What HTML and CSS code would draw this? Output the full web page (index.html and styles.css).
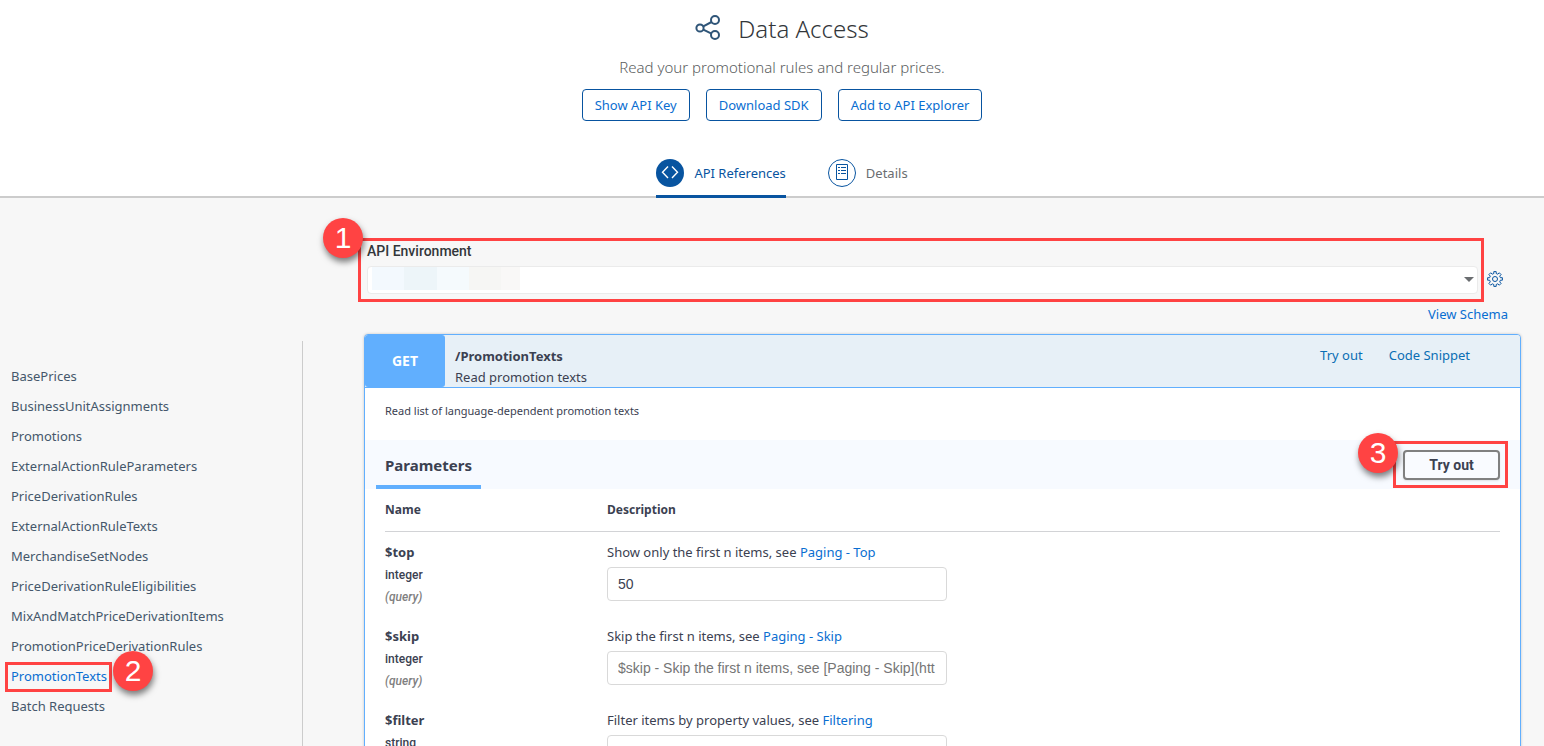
FILE: index.html
```html
<!DOCTYPE html>
<html lang="en">
<head>
<meta charset="utf-8">
<meta name="viewport" content="width=device-width, initial-scale=1">
<title>Data Access</title>
<link rel="stylesheet" href="styles.css">
</head>
<body>
<div class="page">
  <header class="hero">
    <div class="hero-title">
      <svg class="share-icon" viewBox="0 0 26 26" width="26" height="26" aria-hidden="true">
        <g fill="none" stroke="#2f5578" stroke-width="2">
          <circle cx="5" cy="14" r="3.600"/>
          <circle cx="20" cy="6" r="4"/>
          <circle cx="20" cy="21" r="4"/>
          <path d="M8.300 12.300 16.500 8M8.300 15.700l8.200 4"/>
        </g>
      </svg>
      <h1>Data Access</h1>
    </div>
    <p class="hero-text">Read your promotional rules and regular prices.</p>
    <div class="hero-actions">
      <button type="button" class="btn">Show API Key</button>
      <button type="button" class="btn">Download SDK</button>
      <button type="button" class="btn">Add to API Explorer</button>
    </div>
    <nav class="tabs" aria-label="API sections">
      <a href="#references" class="tab tab-active">
        <svg viewBox="0 0 28 28" width="28" height="28" aria-hidden="true">
          <circle cx="14" cy="14" r="14" fill="#0854a0"/>
          <path d="M12 7.500 6.500 13.300 12 19M16 7.500l5.500 5.800L16 19" fill="none" stroke="#fff" stroke-width="1.400"/>
        </svg>
        <span>API References</span>
      </a>
      <a href="#details" class="tab">
        <svg viewBox="0 0 28 28" width="28" height="28" aria-hidden="true">
          <g fill="none" stroke="#0854a0">
            <circle cx="14" cy="14" r="13.500"/>
            <path d="M8.500 5.500h11v15h-11z"/>
            <path d="M10 8.500h2M13 8.500h5M10 11.500h2M13 11.500h5M10 14.500h2M13 14.500h5"/>
          </g>
        </svg>
        <span>Details</span>
      </a>
    </nav>
  </header>

  <div class="body">
    <nav class="sidebar" aria-label="Resources">
      <ul>
        <li><a href="#BasePrices">BasePrices</a></li>
        <li><a href="#BusinessUnitAssignments">BusinessUnitAssignments</a></li>
        <li><a href="#Promotions">Promotions</a></li>
        <li><a href="#ExternalActionRuleParameters">ExternalActionRuleParameters</a></li>
        <li><a href="#PriceDerivationRules">PriceDerivationRules</a></li>
        <li><a href="#ExternalActionRuleTexts">ExternalActionRuleTexts</a></li>
        <li><a href="#MerchandiseSetNodes">MerchandiseSetNodes</a></li>
        <li><a href="#PriceDerivationRuleEligibilities">PriceDerivationRuleEligibilities</a></li>
        <li><a href="#MixAndMatchPriceDerivationItems">MixAndMatchPriceDerivationItems</a></li>
        <li><a href="#PromotionPriceDerivationRules">PromotionPriceDerivationRules</a></li>
        <li class="callout callout-link"><a class="current" href="#PromotionTexts">PromotionTexts</a><span class="badge">2</span></li>
        <li><a href="#BatchRequests">Batch Requests</a></li>
      </ul>
    </nav>

    <main class="main">
      <div class="env-row">
        <div class="env callout callout-env">
          <label for="env">API Environment</label>
          <div class="select-wrap">
            <select id="env"><option value=""></option></select>
            <svg class="caret" viewBox="0 0 10 5" width="10" height="5" aria-hidden="true"><path d="M0 0h10L5 5z" fill="#6a6d70"/></svg>
          </div>
          <span class="badge">1</span>
        </div>
        <button type="button" class="gear" aria-label="Configure environments">
          <svg viewBox="0 0 16 16" width="16" height="16" aria-hidden="true">
            <g fill="none" stroke="#0854a0" stroke-linejoin="round">
              <path d="M6.800.600h2.400v1.900l1.600.700 1.500-1.400 1.800 1.800-1.400 1.500.700 1.600h2v2.500h-2l-.700 1.700 1.400 1.500-1.800 1.800-1.500-1.400-1.600.700v1.900H6.800v-1.900l-1.600-.700-1.500 1.400-1.800-1.800 1.400-1.500-.700-1.700H.600V6.700h2l.700-1.600-1.400-1.500 1.800-1.800 1.500 1.400 1.600-.700z"/>
              <circle cx="8" cy="8" r="2.500"/>
            </g>
          </svg>
        </button>
      </div>
      <a class="schema-link" href="#schema">View Schema</a>

      <section class="operation">
        <div class="op-head">
          <span class="method">GET</span>
          <div class="op-title">
            <h2>/PromotionTexts</h2>
            <p>Read promotion texts</p>
          </div>
          <div class="op-links">
            <a href="#try">Try out</a>
            <a href="#snippet">Code Snippet</a>
          </div>
        </div>
        <p class="op-description">Read list of language-dependent promotion texts</p>
        <div class="params-head">
          <h3>Parameters</h3>
          <div class="callout callout-try">
            <button type="button" class="try">Try out</button>
            <span class="badge">3</span>
          </div>
        </div>
        <div class="params-body">
          <table class="params">
            <thead><tr><th scope="col">Name</th><th scope="col">Description</th></tr></thead>
            <tbody>
              <tr>
                <td><label class="name" for="top">$top</label><span class="type">integer</span><span class="in">(query)</span></td>
                <td><p>Show only the first n items, see <a href="#paging-top">Paging - Top</a></p><input id="top" type="text" value="50"></td>
              </tr>
              <tr>
                <td><label class="name" for="skip">$skip</label><span class="type">integer</span><span class="in">(query)</span></td>
                <td><p>Skip the first n items, see <a href="#paging-skip">Paging - Skip</a></p><input id="skip" type="text" placeholder="$skip - Skip the first n items, see [Paging - Skip](htt"></td>
              </tr>
              <tr>
                <td><label class="name" for="filter">$filter</label><span class="type">string</span><span class="in">(query)</span></td>
                <td><p>Filter items by property values, see <a href="#filtering">Filtering</a></p><input id="filter" type="text"></td>
              </tr>
            </tbody>
          </table>
        </div>
      </section>
    </main>
  </div>
</div>
</body>
</html>
```

FILE: styles.css
```css
:root {
  --ui: "Noto Sans", "Open Sans", sans-serif;
  --arial: "Liberation Sans", Arial, sans-serif;
  --link: #0a6ed1;
  --brand: #0854a0;
  --get: #61affe;
  --text: #3b4151;
  --mark: #ff4343;
}

* { box-sizing: border-box; }

body {
  margin: 0;
  font: 13px/20px var(--ui);
  color: var(--text);
  background: #f7f7f7;
}

h1, h2, h3, p, ul { margin: 0; padding: 0; }
ul { list-style: none; }
a { color: var(--link); text-decoration: none; }
button { font: inherit; cursor: pointer; }

.page {
  display: flex;
  flex-direction: column;
  height: 100vh;
  overflow: hidden;
}

/* Header */
.hero {
  display: flex;
  flex: none;
  flex-direction: column;
  align-items: center;
  padding: 11px 0 0 20px;
  background: #fff;
  border-bottom: 2px solid #ccc;
}

.hero-title {
  display: flex;
  align-items: center;
  gap: 17px;
  height: 36px;
}

.share-icon { margin-bottom: 4px; }

h1 {
  font: 300 24px/36px var(--ui);
  color: #32363a;
}

.hero-text {
  margin: 10px 0 12px;
  font: 300 15px/20px var(--ui);
  color: #5a5d60;
}

.hero-actions { display: flex; gap: 16px; }

.btn {
  height: 32px;
  padding: 0 12px;
  color: var(--link);
  background: #fff;
  border: 1px solid var(--brand);
  border-radius: 4px;
}

.tabs {
  display: flex;
  gap: 42px;
  margin: 38px 0 -2px;
}

.tab {
  display: flex;
  align-items: center;
  gap: 10px;
  padding-bottom: 8px;
  color: #6a6d70;
  border-bottom: 3px solid transparent;
}

.tab-active {
  color: var(--brand);
  border-color: var(--brand);
}

/* Columns */
.body {
  display: flex;
  flex: 1;
  min-height: 0;
}

.sidebar {
  flex: none;
  width: 303px;
  margin-top: 143px;
  padding: 20px 0 0 11px;
  border-right: 1px solid #ccc;
}

.sidebar li { width: fit-content; line-height: 30px; }
.sidebar a { display: block; color: #45576b; }
.sidebar a.current { color: var(--link); }

.main {
  display: flex;
  flex: 1;
  flex-direction: column;
  min-width: 0;
  padding: 43px 23px 0 61px;
}

/* Numbered callouts */
.callout { position: relative; }

.callout::before {
  content: "";
  position: absolute;
  border: 3px solid var(--mark);
  pointer-events: none;
}

.callout-env::before { inset: -3px -6px -8px -9px; }
.callout-link::before { inset: 1px -5px -1px -6px; }
.callout-try::before { inset: -9px -8px -8px -10px; }

.badge {
  position: absolute;
  width: 40px;
  height: 40px;
  font: 30px/40px var(--arial);
  color: #fff;
  text-align: center;
  background: var(--mark);
  border-radius: 50%;
  box-shadow: 1px 4px 6px rgba(0, 0, 0, .5);
}

.callout-env .badge { top: -23px; left: -44px; }
.callout-link .badge { top: -10px; left: calc(100% + 6px); }
.callout-try .badge { top: -17px; left: -45px; }

/* Environment picker */
.env-row {
  display: flex;
  align-items: flex-end;
  gap: 9px;
  padding-right: 18px;
}

.env { flex: 1; margin-left: 3px; }

.env label {
  display: block;
  margin-bottom: 5px;
  font: 500 14px/20px Roboto, sans-serif;
  color: #32363a;
}

.select-wrap {
  position: relative;
  display: flex;
}

.env select {
  width: 100%;
  height: 28px;
  appearance: none;
  background:
    linear-gradient(90deg, #f3f9fe 32px, #edf5f9 32px 65px, #f5fafd 65px 97px, #f6f6f4 97px 129px, #f9f8f7 129px) 4px 0 / 148px 23px no-repeat,
    #fff;
  border: 1px solid #ebebeb;
  border-radius: 4px;
}

.caret {
  position: absolute;
  top: 11px;
  right: 4px;
}

.gear {
  display: flex;
  margin-bottom: 7px;
  padding: 0;
  background: none;
  border: 0;
}

.schema-link {
  align-self: flex-end;
  margin: 10px 13px;
}

/* Operation panel */
.operation {
  background: #fff;
  border: 1px solid var(--get);
  border-radius: 4px;
  box-shadow: 0 0 3px rgba(0, 0, 0, .2);
}

.op-head {
  display: flex;
  height: 53px;
  background: #e7f0f7;
  border-bottom: 1px solid var(--get);
  border-radius: 3px 3px 0 0;
}

.method {
  width: 80px;
  font-weight: 700;
  font-size: 14px;
  line-height: 52px;
  color: #fff;
  text-align: center;
  background: var(--get);
  border-radius: 3px;
}

.op-title { flex: 1; padding: 11px 0 0 10px; }
.op-title h2 { font: 700 13px/21px var(--ui); }
.op-title p { line-height: 21px; }

.op-links {
  display: flex;
  gap: 26px;
  padding: 10px 50px 0 0;
}

.op-links a { color: #0a6eb4; }

.op-description {
  padding: 13px 20px 19px;
  font-size: 11px;
}

.params-head {
  display: flex;
  align-items: center;
  justify-content: space-between;
  height: 49px;
  padding: 0 20px 0 11px;
  background: #f7faff;
}

h3 {
  height: 49px;
  padding: 0 9px;
  font: 700 15px/50px var(--ui);
  border-bottom: 4px solid var(--get);
}

.try {
  display: block;
  width: 97px;
  height: 30px;
  font: 700 14px/20px Roboto, sans-serif;
  color: var(--text);
  background: #f9fbff;
  border: 2px solid #808080;
  border-radius: 4px;
  box-shadow: 0 1px 2px rgba(0, 0, 0, .1);
}

.params-body { padding: 0 20px; }

.params {
  width: 100%;
  border-spacing: 0;
  table-layout: fixed;
}

.params th {
  height: 43px;
  padding: 0;
  font: 700 12px/20px var(--ui);
  text-align: left;
  border-bottom: 1px solid #d2d3d6;
}

.params th:first-child { width: 222px; }
.params td { height: 84px; padding: 10px 0 0; vertical-align: top; }
.params td p { margin-bottom: 5px; }

.name, .type, .in { display: block; }
.name { font-weight: 700; line-height: 20px; }

.type, .in {
  font: 500 12px/22px Roboto, sans-serif;
}

.type { padding-top: 2px; }
.in { font-style: italic; color: gray; }

.params input {
  display: block;
  width: 340px;
  height: 34px;
  padding: 0 10px;
  font: 14px/20px var(--arial);
  color: var(--text);
  background: #fff;
  border: 1px solid #d9d9d9;
  border-radius: 4px;
}

.params input::placeholder { color: #757575; }
```
